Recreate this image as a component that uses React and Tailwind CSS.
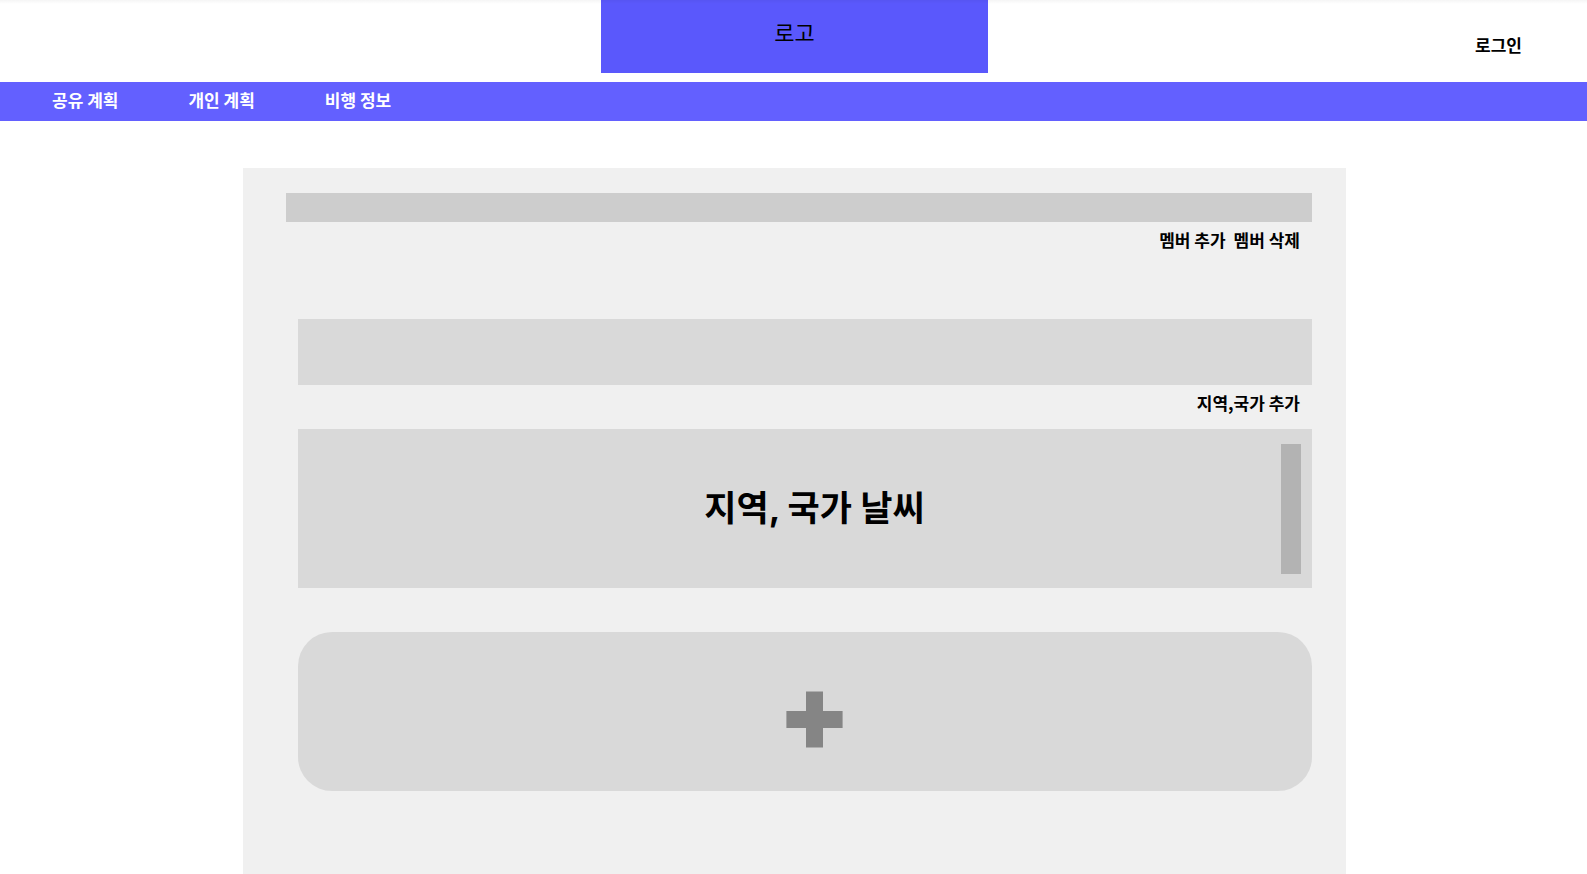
const navItems = ["공유 계획", "개인 계획", "비행 정보"];

function Header() {
  return (
    <header className="relative">
      <div className="grid h-[82px] grid-cols-[1fr_minmax(0,387px)_1fr] pl-0.5">
        <a
          href="#home"
          className="col-start-2 flex h-[73px] items-center justify-center bg-[#5a58fc] pb-3 text-[22px] leading-8"
        >
          로고
        </a>
        <div className="flex items-center justify-end pt-2 pr-[65px]">
          <button type="button" className="text-[17px] leading-6 font-bold">
            로그인
          </button>
        </div>
      </div>
      <nav className="flex h-[39px] items-center gap-[70px] bg-[#6360ff] pb-1 pl-[52px]">
        {navItems.map((item) => (
          <a key={item} href="#plans" className="text-[17px] leading-6 font-bold text-white">
            {item}
          </a>
        ))}
      </nav>
      <div className="pointer-events-none absolute inset-x-0 top-0 h-1 bg-linear-to-b from-black/4 to-transparent" />
    </header>
  );
}

function PlusIcon() {
  return (
    <svg width="57" height="57" viewBox="0 0 57 57" fill="#858585" aria-hidden="true">
      <path d="M20 .4h17V20h19.6v17H37v19.6H20V37H.4V20H20z" />
    </svg>
  );
}

export default function App() {
  return (
    <div className="flex min-h-screen flex-col bg-white font-['Noto_Sans_CJK_KR',sans-serif] text-black">
      <Header />
      <div className="flex flex-1 justify-center pt-[47px] pl-0.5">
        <main className="w-full max-w-[1103px] bg-[#f0f0f0] pt-[25px] pr-[34px] pb-[82px] pl-[43px]">
          <div className="h-[29px] bg-[#cdcdcd]" />
          <div className="flex h-[97px] items-start justify-end gap-2 pt-1.5 pr-3">
            <button type="button" className="text-[17px] leading-6 font-bold">
              멤버 추가
            </button>
            <button type="button" className="text-[17px] leading-6 font-bold">
              멤버 삭제
            </button>
          </div>
          <div className="pl-3">
            <div className="h-[66px] bg-[#d9d9d9]" />
            <div className="flex h-11 items-start justify-end pt-1.5 pr-3">
              <button type="button" className="text-[17px] leading-6 font-bold">
                지역,국가 추가
              </button>
            </div>
            <section className="flex h-[159px] items-center bg-[#d9d9d9] pr-[11px] pl-[50px]">
              <h1 className="flex-1 pb-0.5 text-center font-['Inter','Noto_Sans_CJK_KR',sans-serif] text-[35px] leading-[48px] font-bold">
                지역, 국가 날씨
              </h1>
              <div className="h-[130px] w-5 bg-[#b3b3b3]" />
            </section>
            <button
              type="button"
              aria-label="계획 추가"
              className="mt-11 flex h-[159px] w-full items-center justify-center rounded-[34px] bg-[#d9d9d9] pt-4 pl-[18px]"
            >
              <PlusIcon />
            </button>
          </div>
        </main>
      </div>
    </div>
  );
}
